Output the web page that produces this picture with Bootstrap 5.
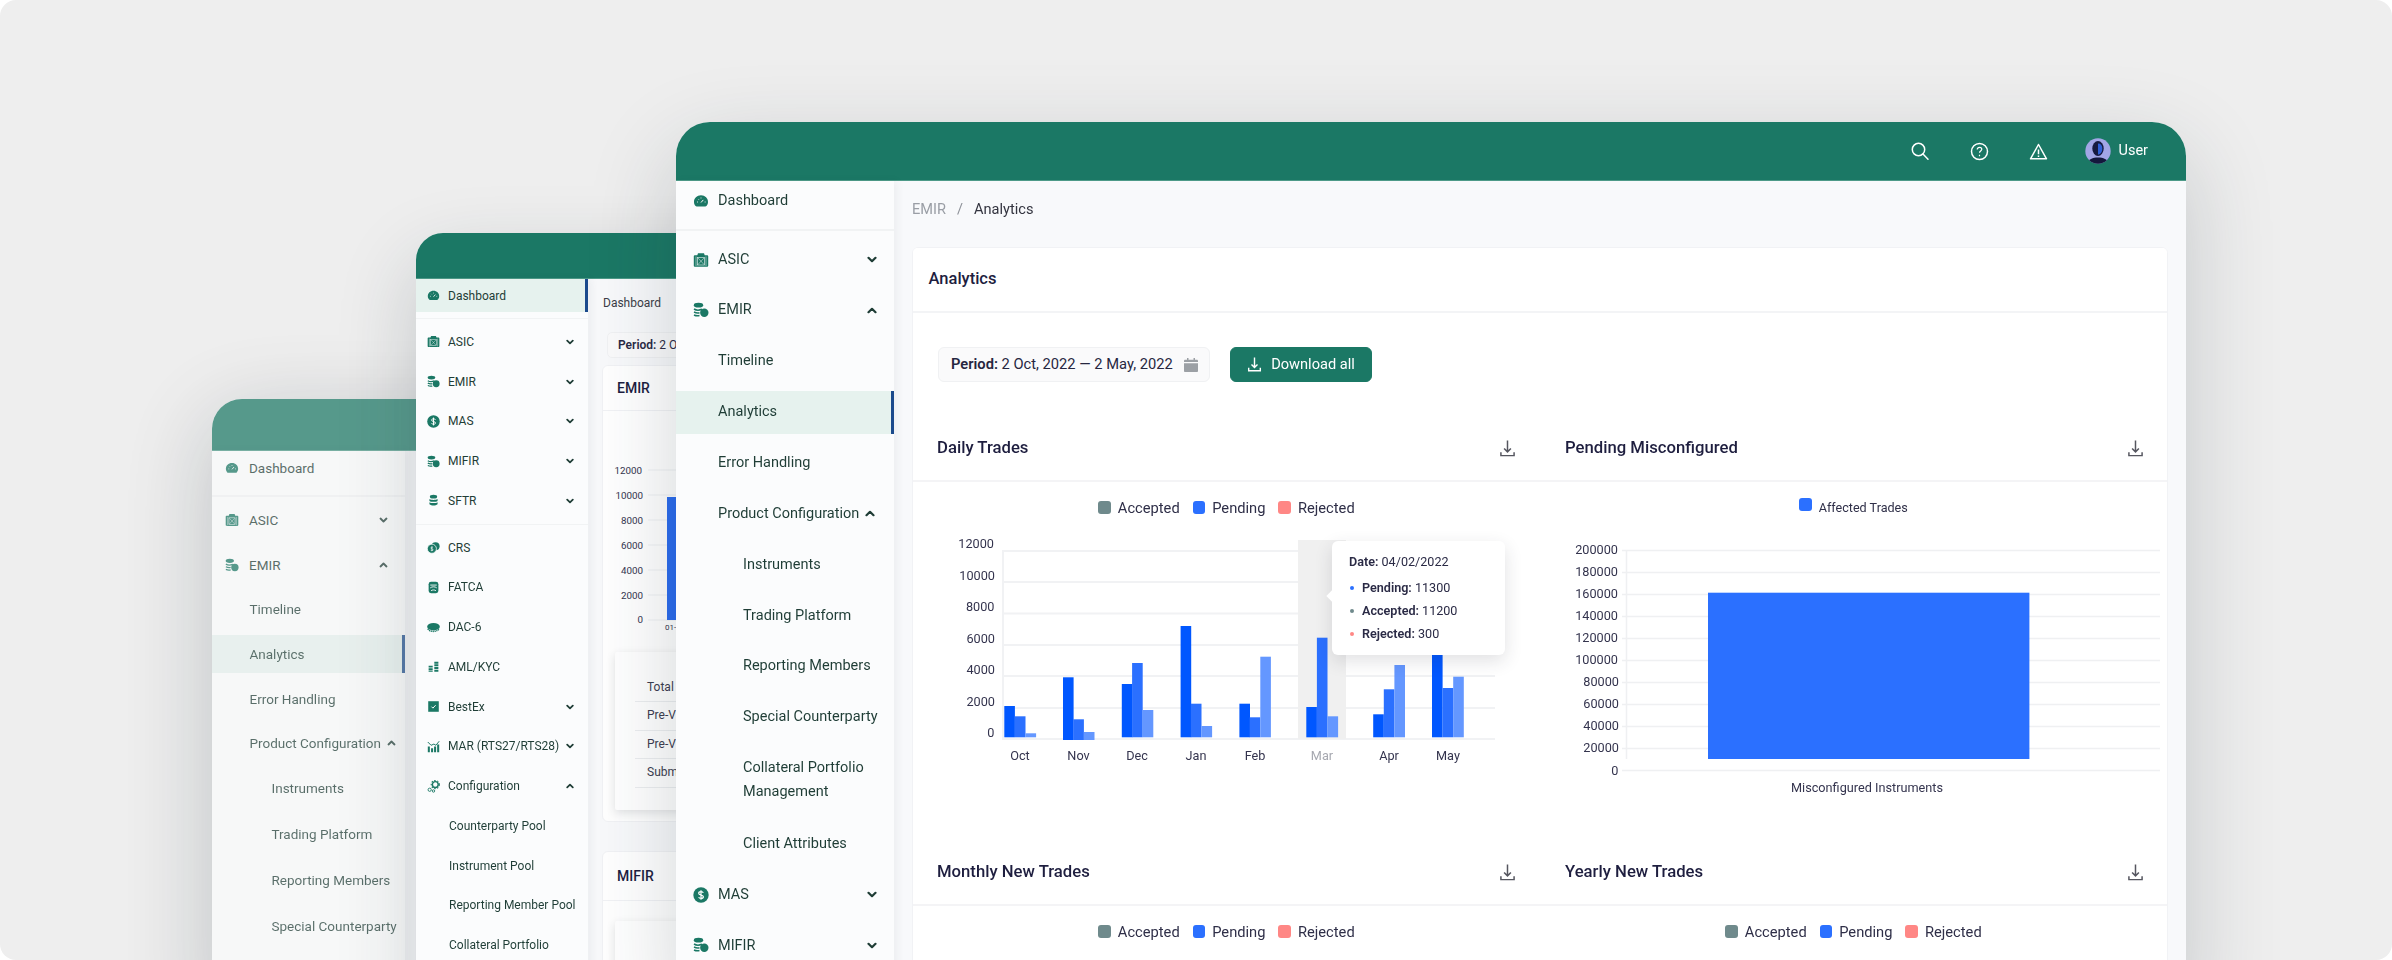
<!DOCTYPE html>
<html lang="en">
<head>
<meta charset="utf-8">
<title>EMIR Analytics</title>
<link href="https://cdn.jsdelivr.net/npm/bootstrap@5.3.0/dist/css/bootstrap.min.css" rel="stylesheet">
<style>
html,body{margin:0;background:#fff;height:960px;overflow:hidden}
body{font-family:Roboto,"Liberation Sans",sans-serif}
.stage{position:relative;width:2392px;height:960px;background:#eee;border-radius:16px;overflow:hidden}
.win{position:absolute;overflow:hidden;background:#f8f9fb;display:flex;flex-direction:column}
.win-a{left:676px;top:122px;width:1510px;height:880px;border-radius:34px 34px 0 0;z-index:3;box-shadow:0 30px 90px rgba(30,45,55,.2)}
.win-wrap-b{position:absolute;left:416px;top:233px;width:900px;height:800px;border-radius:27px 27px 0 0;z-index:2;box-shadow:0 30px 80px rgba(30,45,55,.2)}
.win-b{left:0;top:0;width:900px;height:800px;border-radius:27px 27px 0 0}
.win-wrap-c{position:absolute;left:212px;top:399px;width:400px;height:620px;border-radius:30px 30px 0 0;z-index:1;opacity:.72;box-shadow:0 20px 90px rgba(20,35,45,.3)}
.win-c{left:0;top:0;width:400px;height:620px;border-radius:30px 30px 0 0}
.topbar{background:#1b7865;border-bottom:1px solid #4d9a88;flex:none}
.win-a .topbar{height:59px;padding-right:38px}
.win-b .topbar{height:46px}
.win-c .topbar{height:52px}
.shell{flex:1;min-height:0}
.side{background:#fbfcfd;flex:none;box-shadow:3px 0 8px rgba(40,50,60,.06);color:#1f3d36;position:relative;z-index:1}
.win-a .side{width:218px;font-size:14.5px;--it:43px;--gp:7.85px}
.win-b .side{width:172px;font-size:12px;--it:33.5px;--gp:6.25px}
.win-c .side{width:193px;font-size:13.5px;--it:38px;--gp:6.7px;color:#1f3d36}
.side-sec{padding-top:7px;border-top:2px solid #f1f3f4}
.win-b .side-sec{padding-top:6px;margin-top:6px;border-top-width:1px}
.win-c .side-sec{padding-top:4px}
.win-a .side-sec{margin-top:9px}
.win-c .side-sec{margin-top:10px}
.win-b .side-sec+.side-sec{margin-top:0}
.s-item{height:var(--it);margin-bottom:var(--gp);display:flex;align-items:center;color:inherit;text-decoration:none;position:relative;white-space:nowrap}
.win-a .s-item{padding-left:17px;padding-right:17px}
.win-b .s-item{padding-left:11px;padding-right:14px}
.win-c .s-item{padding-left:13px;padding-right:17px}
.s-dash{height:39px;margin-bottom:0}
.win-b .s-dash{height:33px;margin-bottom:0}
.win-c .s-dash{height:34px;margin-bottom:0}
.ic{width:16px;height:16px;fill:#1b7865;flex:none}
.win-b .ic{width:13px;height:13px}
.win-a .ic{margin-right:9px}
.win-b .ic{margin-right:8px}
.win-c .ic{width:14px;height:14px;margin-right:10px}
.chev{width:10px;height:7px;flex:none;margin-left:auto;fill:none;stroke:#1f3d36;stroke-width:2.2;stroke-linecap:round;stroke-linejoin:round}
.win-b .chev{width:8px;height:6px}
.win-c .chev{width:9px;height:6px}
.lvl2{padding-left:42px!important}
.win-b .lvl2{padding-left:33px!important}
.win-c .lvl2{padding-left:37.5px!important}
.lvl3{padding-left:67px!important}
.win-c .lvl3{padding-left:59.5px!important;margin-bottom:8px}
.s-inline-chev{margin-left:6px}
.s-tall{height:68px;white-space:normal;line-height:24px}
.win-b .s-tall{height:56px;line-height:22px}
.s-act{background:#e6f2ee}
.s-act::after{content:"";position:absolute;right:0;top:0;bottom:0;width:3px;background:#1b4a8c}
.main{flex:1;min-width:0;background:#f8f9fb}
.win-a .main{padding:17px 18px 0}
.crumbs{font-size:14.6px;line-height:22px;margin-bottom:27px;--bs-breadcrumb-divider-color:#8d9198;--bs-breadcrumb-item-active-color:#33343f;--bs-breadcrumb-item-padding-x:11px}
.crumbs .breadcrumb-item:first-child{color:#9a9ea5}
.panel{min-height:800px;--bs-card-border-color:#f1f2f5;--bs-card-border-radius:6px;--bs-card-inner-border-radius:5px;--bs-card-cap-bg:#fff;--bs-card-cap-padding-x:15.5px;--bs-card-cap-padding-y:0;--bs-card-border-width:1px}
.panel-h{height:65px;display:flex;align-items:center;border-bottom:2px solid #f3f4f6;font-weight:500;font-size:16.5px;color:#1e1e3f}
.tools{padding:34px 25px 32px;gap:20px}
.period{height:35px;width:272px;border:1px solid #f0f1f3;background:#fafafb;border-radius:6px;padding:0 11px 0 12px;font-size:14.7px;color:#26263f;white-space:nowrap}
.period b{font-weight:600}
.period svg{margin-left:auto}
.dlbtn{height:35px;width:142px;background:#1b7865;border-color:#1b7865;color:#fff;font-size:14.6px;padding:0;display:flex;align-items:center;justify-content:center;gap:9px;border-radius:6px}
.sec-h{height:68px;border-bottom:2px solid #f4f4f6;font-weight:500;font-size:16.7px;color:#1e1e3f;display:flex;align-items:center;justify-content:space-between;padding:2px 24px 0}
.col-r .sec-h{padding-left:25px;padding-right:23px}
.sec-h svg{width:17px;height:17px;fill:none;stroke:#55565f;stroke-width:1.4}
.lgd{height:50px;font-size:14.7px;color:#2f2f48;gap:13px;padding-top:2px}
.lgd-i{display:flex;align-items:center;gap:7px}
.lgd-s{width:12.5px;height:13px;border-radius:3px;display:block}
.c-acc{background:#6f8a8c}
.c-pen{background:#2b70ff}
.c-rej{background:#ff8785}
.lgd-small{font-size:12.6px;padding-top:0}
.lgd-small .lgd-s{margin-top:-6px}
.lgd-small .lgd-i{margin-top:2px}
.chart{position:relative;height:306px}
.chart svg{display:block;width:628px;height:305px}
.chart text,.b-chart text{font-family:Roboto,sans-serif;font-size:12.7px;fill:#34344e}
.grid{stroke:#f1f2f4;stroke-width:2}
.grid2{stroke:#eff0f2;stroke-width:1.5}
.tip{position:absolute;left:419px;top:9px;width:173px;height:114px;background:#fff;border-radius:6px;box-shadow:0 6px 18px rgba(40,45,60,.14);padding:11px 17px;font-size:12.6px;color:#2a2a45}
.tip::before{content:"";position:absolute;left:-4px;top:51px;width:8px;height:8px;background:#fff;transform:rotate(45deg)}
.tip b{font-weight:600}
.tip-date{line-height:20px;margin-bottom:3.5px}
.tip-row{line-height:23px;padding-left:13px;position:relative}
.tip-row i{position:absolute;left:1px;top:10px;width:4px;height:4px;border-radius:50%}
.headicons{gap:0}
.headicons svg{fill:none;stroke:#fff;stroke-width:1.5}
.hi{width:59px;display:flex;justify-content:center}
.uname{color:#fff;font-size:14.5px;margin-left:8px}
.ava{width:26px;height:26px;margin-left:17px;flex:none}
/* window B main */
.win-b .main{padding:14px 14px 0;color:#2a2a45}
.b-crumb{font-size:12px;line-height:20px;color:#3c3d48;padding-left:1px}
.b-period{margin:19px 0 7px 5px;height:26px;width:220px;border:1px solid #f0f1f3;border-radius:5px;background:#fafafb;font-size:12px;padding:0 10px;line-height:24px;white-space:nowrap}
.b-period b{font-weight:600}
.b-card{background:#fff;border:1px solid #f1f2f5;border-radius:6px;width:700px}
.b-card-h{height:45px;border-bottom:1px solid #f1f2f5;padding-left:14px;font-size:14px;font-weight:500;color:#1e1e3f;display:flex;align-items:center}
.b-chart{display:block;width:698px;height:241px}
.b-chart text{font-size:9.8px}
.b-inner{margin:0 0 11px 12px;height:158px;width:600px;background:#fff;box-shadow:0 3px 10px rgba(40,50,60,.14);border-radius:2px;padding:22px 20px 0}
.b-row{height:28.4px;border-bottom:1px solid #eceef0;font-size:12px;color:#3c3d50;padding:0 12px;line-height:27px}
.b-card2{margin-top:29px;height:300px}
.b-card2 .b-card-h{height:49px}
.b-inner2{margin:20px 0 0 12px;height:200px}
</style>
</head>
<body>
<svg width="0" height="0" class="position-absolute" aria-hidden="true">
<defs>
<symbol id="i-gauge" viewBox="0 0 16 16"><path d="M8 2.2C3.9 2.2 1 5.2 1 8.900c0 1.600.6 3 1.600 4.100.3.300.6.500 1 .500h8.800c.4 0 .7-.2 1-.5 1-1.100 1.600-2.500 1.600-4.100 0-3.700-2.900-6.700-7-6.700z"/><path d="M8 9.500l2.300-2.600M4 9h.8M8 4.600v.8M11.700 9h.8M5.200 6l.5.5" stroke="#fff" stroke-width="1" fill="none"/></symbol>
<symbol id="i-chip" viewBox="0 0 16 16"><path d="M5 1.200h6l.7 2H14c.6 0 1.200.4 1.200 1v9.600c0 .6-.6 1-1.200 1H2c-.6 0-1.200-.4-1.200-1V4.200c0-.6.6-1 1.200-1h2.300z"/><rect x="4.500" y="5.500" width="7" height="7.500" fill="none" stroke="#fff" stroke-width=".7" stroke-opacity=".8"/><path d="M5 6l6 6.500M11 6l-6 6.500M3 4.500v9.500M13 4.500v9.500" stroke="#fff" stroke-width=".6" stroke-opacity=".8" fill="none"/></symbol>
<symbol id="i-coins" viewBox="0 0 16 16"><ellipse cx="5.500" cy="3.200" rx="4.700" ry="2.400"/><path d="M1 7c2 1.300 5.500 1.300 8 .3M1 10c2 1 4 1.100 5.500.7M1 13c1.800.9 3.600 1 5.500.6" fill="none" stroke="#1b7865" stroke-width="1.500"/><circle cx="11.300" cy="10.800" r="4.200"/></symbol>
<symbol id="i-dollar" viewBox="0 0 16 16"><circle cx="8" cy="8" r="7.700"/><path d="M10.300 5.900C10 5 9.100 4.600 8 4.600c-1.300 0-2.300.7-2.300 1.700 0 2.400 4.700 1.100 4.700 3.500 0 1-1 1.700-2.400 1.700-1.100 0-2-.5-2.300-1.400M8 3.200v9.600" fill="none" stroke="#fff" stroke-width="1.200"/></symbol>
<symbol id="i-stack" viewBox="0 0 16 16"><ellipse cx="8" cy="3.300" rx="4.500" ry="2.300"/><path d="M3 6.200c2.500 1.500 7.500 1.500 10 0v2.300c-2.500 1.500-7.500 1.500-10 0zM3 10c2.500 1.500 7.500 1.500 10 0v2.600c-2.500 2-7.500 2-10 0z"/></symbol>
<symbol id="i-crs" viewBox="0 0 16 16"><circle cx="10.500" cy="6.500" r="5" /><circle cx="6" cy="9.500" r="5.600" stroke="#fff" stroke-width=".9"/><path d="M6 6.700v5.600M7.400 7.900C7 7.300 4.700 7.300 4.700 8.600s2.800 1 2.800 2.300-2.500 1.300-3 .5" fill="none" stroke="#fff" stroke-width=".8"/></symbol>
<symbol id="i-fatca" viewBox="0 0 16 16"><rect x="2" y="1" width="12" height="14" rx="3"/><path d="M4 5h8M4 8.500c2-1.800 6-1.800 8 0M5 12c1.500-1.300 4.500-1.300 6 0" fill="none" stroke="#fff" stroke-width="1.100"/></symbol>
<symbol id="i-disc" viewBox="0 0 16 16"><ellipse cx="8" cy="7" rx="7.800" ry="4.600"/><path d="M1 9.500c1.600 2.300 4 3.300 7 3.300s5.400-1 7-3.300" fill="none" stroke="#1b7865" stroke-width="1.800" stroke-dasharray="1.500 .8"/></symbol>
<symbol id="i-aml" viewBox="0 0 16 16"><path d="M2 7h5v2.200H2zM2 10h5v2.200H2zM2 13h5v1.500H2zM9 2h5v2.500H9zM9 5.300h5v2.500H9zM9 8.600h5v2.500H9zM9 12h5v2.500H9z"/></symbol>
<symbol id="i-check" viewBox="0 0 16 16"><rect x="1.500" y="1.500" width="13" height="13"/><path d="M5.500 8.200l1.800 1.800 3.300-3.600" fill="none" stroke="#fff" stroke-width="1.200"/></symbol>
<symbol id="i-mar" viewBox="0 0 16 16"><path d="M1 8h2.500v7H1zM5 10h2.500v5H5zM8.700 8h2.500v7H8.700zM12.500 5.500H15V15h-2.500z"/><path d="M1 2.500l4 4 3.500-1.500 2.500 1.500 4-5" fill="none" stroke="#1b7865" stroke-width="1.200"/></symbol>
<symbol id="i-conf" viewBox="0 0 16 16"><circle cx="10.200" cy="5.600" r="3.600" fill="none" stroke="#1b7865" stroke-width="1.800"/><circle cx="10.200" cy="5.600" r="5" fill="none" stroke="#1b7865" stroke-width="1.300" stroke-dasharray="1.800 1.800"/><circle cx="3.300" cy="12" r="2" fill="none" stroke="#1b7865" stroke-width="1.100"/><circle cx="8" cy="13.500" r="1.500" fill="none" stroke="#1b7865" stroke-width="1.100"/></symbol>
<symbol id="i-dn" viewBox="0 0 16 16"><path d="M8 .5v10.500M4.800 8L8 11.200 11.200 8M1.800 11.500v3.200h12.400v-3.200"/></symbol>
<symbol id="i-up" viewBox="0 0 10 7"><path d="M1.500 5.200L5 1.800l3.500 3.400"/></symbol>
<symbol id="i-down" viewBox="0 0 10 7"><path d="M1.500 1.800L5 5.200l3.500-3.400"/></symbol>
</defs>
</svg>

<div class="stage">

<!-- back window -->
<div class="win-wrap-c">
<div class="win win-c">
  <div class="topbar"></div>
  <div class="shell d-flex">
    <aside class="side">
      <a class="s-item s-dash"><svg class="ic"><use href="#i-gauge"/></svg>Dashboard</a>
      <div class="side-sec">
        <a class="s-item"><svg class="ic"><use href="#i-chip"/></svg>ASIC<svg class="chev"><use href="#i-down"/></svg></a>
        <a class="s-item"><svg class="ic"><use href="#i-coins"/></svg>EMIR<svg class="chev"><use href="#i-up"/></svg></a>
        <a class="s-item lvl2">Timeline</a>
        <a class="s-item lvl2 s-act">Analytics</a>
        <a class="s-item lvl2">Error Handling</a>
        <a class="s-item lvl2">Product Configuration<svg class="chev s-inline-chev"><use href="#i-up"/></svg></a>
        <a class="s-item lvl3">Instruments</a>
        <a class="s-item lvl3">Trading Platform</a>
        <a class="s-item lvl3">Reporting Members</a>
        <a class="s-item lvl3">Special Counterparty</a>
      </div>
    </aside>
    <div class="main"></div>
  </div>
</div>
</div>

<!-- middle window -->
<div class="win-wrap-b">
<div class="win win-b">
  <div class="topbar"></div>
  <div class="shell d-flex">
    <aside class="side">
      <a class="s-item s-dash s-act"><svg class="ic"><use href="#i-gauge"/></svg>Dashboard</a>
      <div class="side-sec">
        <a class="s-item"><svg class="ic"><use href="#i-chip"/></svg>ASIC<svg class="chev"><use href="#i-down"/></svg></a>
        <a class="s-item"><svg class="ic"><use href="#i-coins"/></svg>EMIR<svg class="chev"><use href="#i-down"/></svg></a>
        <a class="s-item"><svg class="ic"><use href="#i-dollar"/></svg>MAS<svg class="chev"><use href="#i-down"/></svg></a>
        <a class="s-item"><svg class="ic"><use href="#i-coins"/></svg>MIFIR<svg class="chev"><use href="#i-down"/></svg></a>
        <a class="s-item"><svg class="ic"><use href="#i-stack"/></svg>SFTR<svg class="chev"><use href="#i-down"/></svg></a>
      </div>
      <div class="side-sec">
        <a class="s-item"><svg class="ic"><use href="#i-crs"/></svg>CRS</a>
        <a class="s-item"><svg class="ic"><use href="#i-fatca"/></svg>FATCA</a>
        <a class="s-item"><svg class="ic"><use href="#i-disc"/></svg>DAC-6</a>
        <a class="s-item"><svg class="ic"><use href="#i-aml"/></svg>AML/KYC</a>
        <a class="s-item"><svg class="ic"><use href="#i-check"/></svg>BestEx<svg class="chev"><use href="#i-down"/></svg></a>
        <a class="s-item"><svg class="ic"><use href="#i-mar"/></svg>MAR (RTS27/RTS28)<svg class="chev"><use href="#i-down"/></svg></a>
        <a class="s-item"><svg class="ic"><use href="#i-conf"/></svg>Configuration<svg class="chev"><use href="#i-up"/></svg></a>
        <a class="s-item lvl2">Counterparty Pool</a>
        <a class="s-item lvl2">Instrument Pool</a>
        <a class="s-item lvl2">Reporting Member Pool</a>
        <a class="s-item lvl2 s-tall">Collateral Portfolio Management</a>
      </div>
    </aside>
    <div class="main">
      <div class="b-crumb">Dashboard</div>
      <div class="b-period"><b>Period:</b> 2 Oct</div>
      <div class="b-card">
        <div class="b-card-h">EMIR</div>
        <svg class="b-chart" viewBox="603 411 698 241">
          <g stroke="#f0f1f3" stroke-width="1.200"><path d="M648 470h60M648 495h60M648 520h60M648 545h60M648 570h60M648 595h60M648 620h60"/></g>
          <g text-anchor="end"><text x="642" y="473.500">12000</text><text x="643" y="498.500">10000</text><text x="643" y="523.500">8000</text><text x="643" y="548.500">6000</text><text x="643" y="573.500">4000</text><text x="643" y="598.500">2000</text><text x="643" y="622.500">0</text></g>
          <rect x="667" y="497" width="40" height="123" fill="#2b6cef"/>
          <text x="665" y="630" style="font-size:8px">01-</text>
        </svg>
        <div class="b-inner">
          <div class="b-row">Total</div>
          <div class="b-row">Pre-V</div>
          <div class="b-row">Pre-V</div>
          <div class="b-row">Subm</div>
        </div>
      </div>
      <div class="b-card b-card2">
        <div class="b-card-h">MIFIR</div>
        <div class="b-inner b-inner2"></div>
      </div>
    </div>
  </div>
</div>
</div>

<!-- front window -->
<div class="win win-a">
  <div class="topbar d-flex align-items-center justify-content-end">
    <div class="headicons d-flex align-items-center">
      <span class="hi"><svg width="20" height="20" viewBox="0 0 20 20"><circle cx="8.500" cy="8.500" r="6.200"/><path d="M13 13l5 5.200" stroke-linecap="round"/></svg></span>
      <span class="hi"><svg width="19" height="19" viewBox="0 0 19 19"><circle cx="9.500" cy="9.500" r="8"/><path d="M7.200 7.500c0-1.400 1-2.200 2.300-2.200s2.300.8 2.300 2c0 1.700-2.300 1.700-2.300 3.500M9.500 12.800v1.400" stroke-width="1.200"/></svg></span>
      <span class="hi"><svg width="19" height="17" viewBox="0 0 19 17"><path d="M9.500 1.500L1.500 15.800h16zM9.500 6.500v4.800M9.500 12.600v1.300" stroke-linejoin="round"/></svg></span>
      <svg class="ava" viewBox="0 0 26 26">
        <defs><clipPath id="avc"><circle cx="13" cy="13" r="12.700"/></clipPath></defs>
        <g clip-path="url(#avc)" stroke="none"><rect width="26" height="26" fill="#a2a6e6"/><ellipse cx="13" cy="10.500" rx="5.700" ry="7.500" fill="#171a40"/><path d="M13 5.500c3 0 4.300 2 4.300 5 0 3.500-1.800 6-4.300 6z" fill="#2f5fd6"/><path d="M2 26c1-5 6-6.500 11-6.500S23 21 24 26z" fill="#14183c"/></g>
      </svg>
      <span class="uname">User</span>
    </div>
  </div>
  <div class="shell d-flex">
    <aside class="side">
      <a class="s-item s-dash"><svg class="ic"><use href="#i-gauge"/></svg>Dashboard</a>
      <div class="side-sec">
        <a class="s-item"><svg class="ic"><use href="#i-chip"/></svg>ASIC<svg class="chev"><use href="#i-down"/></svg></a>
        <a class="s-item"><svg class="ic"><use href="#i-coins"/></svg>EMIR<svg class="chev"><use href="#i-up"/></svg></a>
        <a class="s-item lvl2">Timeline</a>
        <a class="s-item lvl2 s-act">Analytics</a>
        <a class="s-item lvl2">Error Handling</a>
        <a class="s-item lvl2">Product Configuration<svg class="chev s-inline-chev"><use href="#i-up"/></svg></a>
        <a class="s-item lvl3">Instruments</a>
        <a class="s-item lvl3">Trading Platform</a>
        <a class="s-item lvl3">Reporting Members</a>
        <a class="s-item lvl3">Special Counterparty</a>
        <a class="s-item lvl3 s-tall">Collateral Portfolio Management</a>
        <a class="s-item lvl3">Client Attributes</a>
        <a class="s-item"><svg class="ic"><use href="#i-dollar"/></svg>MAS<svg class="chev"><use href="#i-down"/></svg></a>
        <a class="s-item"><svg class="ic"><use href="#i-coins"/></svg>MIFIR<svg class="chev"><use href="#i-down"/></svg></a>
      </div>
    </aside>
    <main class="main">
      <ol class="breadcrumb crumbs">
        <li class="breadcrumb-item">EMIR</li>
        <li class="breadcrumb-item active">Analytics</li>
      </ol>
      <div class="card panel">
        <div class="card-header panel-h">Analytics</div>
        <div class="tools d-flex align-items-center">
          <div class="period d-flex align-items-center"><span><b>Period:</b> 2 Oct, 2022 — 2 May, 2022</span>
            <svg width="14" height="14" viewBox="0 0 14 14" fill="#9ca0a5"><path d="M0 3c0-.8.5-1.300 1.300-1.300H3V0h1.500v1.700h5V0H11v1.700h1.700c.8 0 1.300.5 1.300 1.300v1H0zM0 5.300h14V13c0 .6-.5 1-1.200 1H1.200C.5 14 0 13.600 0 13z"/></svg>
          </div>
          <button class="btn dlbtn" type="button"><svg width="15" height="15" fill="none" stroke="#fff" stroke-width="1.500"><use href="#i-dn"/></svg>Download all</button>
        </div>
        <div class="row g-0">
          <div class="col-6">
            <div class="sec-h"><span>Daily Trades</span><svg><use href="#i-dn"/></svg></div>
            <div class="lgd d-flex justify-content-center align-items-center">
              <span class="lgd-i"><i class="lgd-s c-acc"></i>Accepted</span>
              <span class="lgd-i"><i class="lgd-s c-pen"></i>Pending</span>
              <span class="lgd-i"><i class="lgd-s c-rej"></i>Rejected</span>
            </div>
            <div class="chart">
              <svg viewBox="912 532 628 305">
                <path class="grid" d="M1001 551h493M1001 582h493M1001 613.500h493M1001 645h493M1001 676h493M1001 708h493M1001 739h493M1002 550v190"/>
                <rect x="1297" y="540" width="48" height="199" fill="#f0f0f0"/>
                <g text-anchor="end"><text x="993" y="547.500">12000</text><text x="994" y="579.500">10000</text><text x="993.500" y="611">8000</text><text x="994" y="642.500">6000</text><text x="994" y="674">4000</text><text x="994" y="705.500">2000</text><text x="993.500" y="737">0</text></g>
                <g fill="#0057ff">
                  <rect x="1003.300" y="706" width="10.600" height="31.300"/><rect x="1062" y="677.300" width="10.600" height="62.700"/><rect x="1120.800" y="684" width="10.600" height="53.300"/><rect x="1179.600" y="626" width="10.600" height="111.300"/><rect x="1238.400" y="703.700" width="10.600" height="33.600"/><rect x="1305.300" y="707" width="10.600" height="30.300"/><rect x="1372.200" y="714.300" width="10.600" height="23"/><rect x="1431" y="640" width="10.600" height="97.300"/>
                </g>
                <g fill="#2b70ff">
                  <rect x="1013.900" y="716.300" width="10.600" height="21"/><rect x="1072.300" y="719.300" width="10.600" height="20.700"/><rect x="1131.100" y="663" width="10.600" height="74.300"/><rect x="1189.900" y="703.700" width="10.600" height="33.600"/><rect x="1248.700" y="717.300" width="10.600" height="20"/><rect x="1315.900" y="637.700" width="10.600" height="99.600"/><rect x="1382.800" y="689.300" width="10.600" height="48"/><rect x="1441.600" y="688" width="10.600" height="49.300"/>
                </g>
                <g fill="#6497ff">
                  <rect x="1024.500" y="733.300" width="10.600" height="4"/><rect x="1082.900" y="732" width="10.600" height="8"/><rect x="1141.700" y="710" width="10.600" height="27.300"/><rect x="1200.500" y="726" width="10.600" height="11.300"/><rect x="1259.300" y="656.700" width="10.600" height="80.600"/><rect x="1326.500" y="716.300" width="10.600" height="21"/><rect x="1393.400" y="665" width="10.600" height="72.300"/><rect x="1452.200" y="676.700" width="10.600" height="60.600"/>
                </g>
                <g text-anchor="middle"><text x="1019" y="759.500">Oct</text><text x="1077.500" y="759.500">Nov</text><text x="1136" y="759.500">Dec</text><text x="1195" y="759.500">Jan</text><text x="1254" y="759.500">Feb</text><text x="1321" y="759.500" style="fill:#a6a8b0">Mar</text><text x="1388" y="759.500">Apr</text><text x="1447" y="759.500">May</text></g>
              </svg>
              <div class="tip">
                <div class="tip-date"><b>Date:</b> 04/02/2022</div>
                <div class="tip-row"><i class="c-pen"></i><b>Pending:</b> 11300</div>
                <div class="tip-row"><i class="c-acc"></i><b>Accepted:</b> 11200</div>
                <div class="tip-row"><i class="c-rej"></i><b>Rejected:</b> 300</div>
              </div>
            </div>
            <div class="sec-h"><span>Monthly New Trades</span><svg><use href="#i-dn"/></svg></div>
            <div class="lgd d-flex justify-content-center align-items-center">
              <span class="lgd-i"><i class="lgd-s c-acc"></i>Accepted</span>
              <span class="lgd-i"><i class="lgd-s c-pen"></i>Pending</span>
              <span class="lgd-i"><i class="lgd-s c-rej"></i>Rejected</span>
            </div>
          </div>
          <div class="col-6 col-r">
            <div class="sec-h"><span>Pending Misconfigured</span><svg><use href="#i-dn"/></svg></div>
            <div class="lgd lgd-small d-flex justify-content-center align-items-center">
              <span class="lgd-i"><i class="lgd-s c-pen"></i>Affected Trades</span>
            </div>
            <div class="chart">
              <svg viewBox="1540 532 628 305">
                <path class="grid2" d="M1622 550.500h538M1622 572.500h538M1622 594.500h538M1622 616.500h538M1622 638.500h538M1622 660.500h538M1622 682.500h538M1622 704.500h538M1622 726.500h538M1622 748.500h538M1622 770.500h538M1626.500 550v209"/>
                <rect x="1708" y="592.700" width="321.400" height="166.300" fill="#2b70ff"/>
                <g text-anchor="end"><text x="1618" y="554">200000</text><text x="1618" y="576">180000</text><text x="1618" y="598">160000</text><text x="1618" y="620">140000</text><text x="1618" y="642">120000</text><text x="1618" y="664">100000</text><text x="1619" y="686">80000</text><text x="1619" y="708">60000</text><text x="1619" y="730">40000</text><text x="1619" y="752">20000</text><text x="1618.500" y="774.500">0</text></g>
                <text x="1867" y="792" text-anchor="middle">Misconfigured Instruments</text>
              </svg>
            </div>
            <div class="sec-h"><span>Yearly New Trades</span><svg><use href="#i-dn"/></svg></div>
            <div class="lgd d-flex justify-content-center align-items-center">
              <span class="lgd-i"><i class="lgd-s c-acc"></i>Accepted</span>
              <span class="lgd-i"><i class="lgd-s c-pen"></i>Pending</span>
              <span class="lgd-i"><i class="lgd-s c-rej"></i>Rejected</span>
            </div>
          </div>
        </div>
      </div>
    </main>
  </div>
</div>

</div>
<script src="https://cdn.jsdelivr.net/npm/bootstrap@5.3.0/dist/js/bootstrap.bundle.min.js"></script>
</body>
</html>
